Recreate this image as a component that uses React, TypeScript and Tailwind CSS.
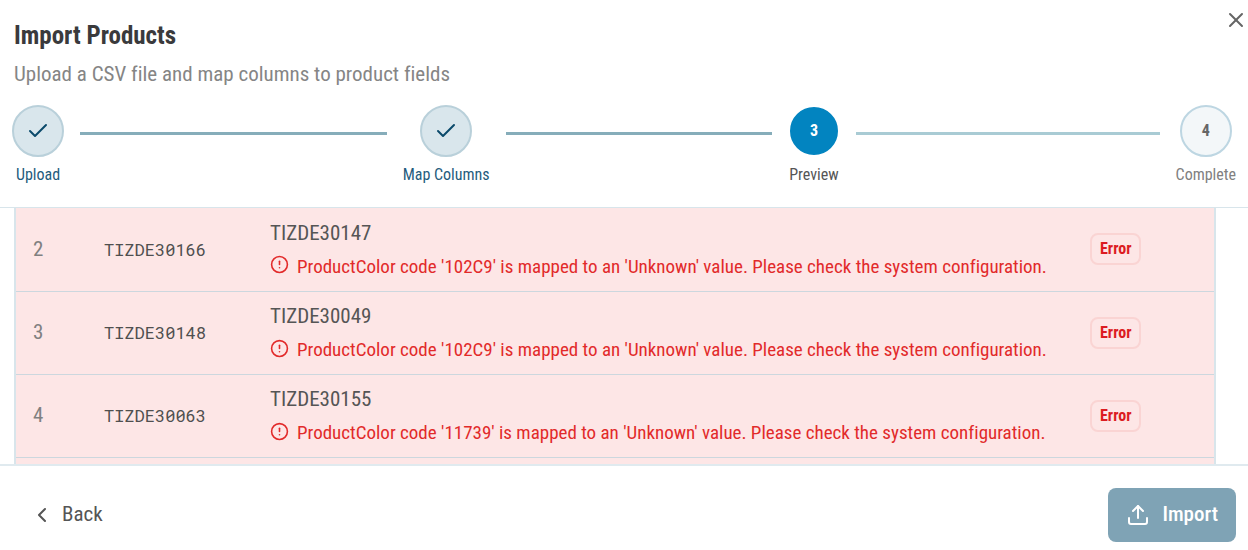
import React from "react";
import { Check, ChevronLeft, CircleAlert, Upload, X } from "lucide-react";

type StepState = "done" | "current" | "upcoming";

type Step = {
  label: string;
  state: StepState;
  line?: string;
};

type Row = {
  index: number;
  sku: string;
  name: string;
  color: string;
};

const steps: Step[] = [
  { label: "Upload", state: "done", line: "flex-[305] bg-[#86adba]" },
  { label: "Map Columns", state: "done", line: "flex-[265] bg-[#86adba]" },
  { label: "Preview", state: "current", line: "flex-[302] bg-[#a9cbd4]" },
  { label: "Complete", state: "upcoming" },
];

const rows: Row[] = [
  { index: 2, sku: "TIZDE30166", name: "TIZDE30147", color: "102C9" },
  { index: 3, sku: "TIZDE30148", name: "TIZDE30049", color: "102C9" },
  { index: 4, sku: "TIZDE30063", name: "TIZDE30155", color: "11739" },
];

const circleStyles: Record<StepState, string> = {
  done: "border-2 border-[#b9d0da] bg-[#d9e6ec] text-[#0b4a6b]",
  current: "border-2 border-white bg-[#0284c0] text-white",
  upcoming: "border-2 border-[#bdd6e2] bg-[#f3f7f9] text-[#666666]",
};

const labelStyles: Record<StepState, string> = {
  done: "text-[#1f5c7d]",
  current: "text-[#555555]",
  upcoming: "text-[#808080]",
};

const Stepper: React.FC = () => {
  return (
    <ol className="flex items-start px-3">
      {steps.map((step, i) => (
        <React.Fragment key={step.label}>
          <li className="flex shrink-0 flex-col items-center gap-2">
            <span
              className={`flex size-[52px] items-center justify-center rounded-full text-base font-bold ${circleStyles[step.state]}`}
            >
              {step.state === "done" ? <Check size={24} /> : i + 1}
            </span>
            <span className={`text-base leading-5 ${labelStyles[step.state]}`}>
              {step.label}
            </span>
          </li>
          {step.line && (
            <li
              aria-hidden="true"
              className={`mx-4 mt-[27px] h-[3px] ${step.line}`}
            />
          )}
        </React.Fragment>
      ))}
    </ol>
  );
};

const PreviewRow: React.FC<{ row: Row }> = ({ row }) => {
  return (
    <tr className="h-[83px] border-b border-[#ccd7de]">
      <td className="w-[89px] pl-[17px] text-[21px] text-[#808080]">
        {row.index}
      </td>
      <td className="w-[166px] font-['Roboto_Mono','Liberation_Mono',monospace] text-[17px] text-[#4f4f4f]">
        {row.sku}
      </td>
      <td className="pt-[3px]">
        <div className="text-[21px] leading-7 text-[#555555]">{row.name}</div>
        <div className="mt-1 flex items-center gap-2 text-[19px] leading-8 text-[#e22a2a]">
          <CircleAlert size={19} className="mb-1 shrink-0" />
          <span>
            ProductColor code '{row.color}' is mapped to an 'Unknown' value.
            Please check the system configuration.
          </span>
        </div>
      </td>
      <td className="w-[125px]">
        <span className="inline-block rounded-lg border-2 border-[#fad4d3] px-2 text-base leading-7 font-bold text-[#dc1c22]">
          Error
        </span>
      </td>
    </tr>
  );
};

const App: React.FC = () => {
  return (
    <main className="flex h-screen flex-col bg-white font-['Roboto_Condensed','Liberation_Sans_Narrow',sans-serif] [font-variant-ligatures:none]">
      <header className="relative border-b border-[#d8e5eb] pt-5 pb-[22px]">
        <h1 className="px-[14px] text-[25px] leading-8 font-bold text-[#3a3a3c]">
          Import Products
        </h1>
        <p className="mt-2 mb-[17px] px-[14px] text-[21px] leading-7 text-[#858585]">
          Upload a CSV file and map columns to product fields
        </p>
        <Stepper />
        <button
          type="button"
          aria-label="Close"
          className="absolute top-2 right-0 text-[#666666]"
        >
          <X size={24} />
        </button>
      </header>

      <section className="min-h-0 flex-1 overflow-y-auto pr-8 pl-[14px] [scrollbar-width:none]">
        <table className="w-full border-x-2 border-[#d8e5eb] bg-[#fde6e6] text-left">
          <tbody>
            {rows.map((row) => (
              <PreviewRow key={row.index} row={row} />
            ))}
            <tr className="h-10">
              <td colSpan={4} />
            </tr>
          </tbody>
        </table>
      </section>

      <footer className="flex items-center justify-between border-t-2 border-[#e0eaef] pt-[22px] pr-3 pb-2 pl-[30px] text-[21px]">
        <button
          type="button"
          className="flex items-center gap-2 text-[#555555]"
        >
          <ChevronLeft size={24} />
          Back
        </button>
        <button
          type="button"
          className="flex h-[54px] items-center gap-3 rounded-lg bg-[#7fa3b5] px-[18px] font-medium text-white"
        >
          <Upload size={24} />
          Import
        </button>
      </footer>
    </main>
  );
};

export default App;
